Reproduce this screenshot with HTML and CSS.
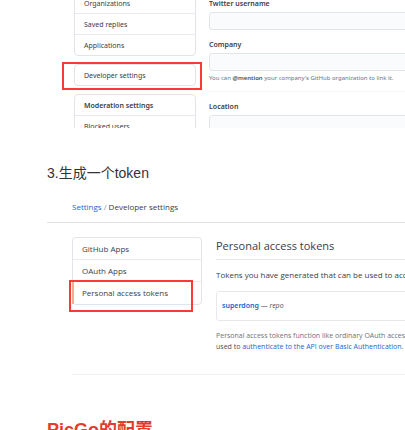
FILE: index.html
```html
<!DOCTYPE html>
<html lang="zh-CN">
<head>
<meta charset="utf-8">
<title>PicGo</title>
<link rel="stylesheet" href="styles.css">
</head>
<body>
<main class="article">
  <section class="profile">
    <nav class="side">
      <ul class="menu">
        <li><a href="#">Organizations</a></li>
        <li><a href="#">Saved replies</a></li>
        <li><a href="#">Applications</a></li>
      </ul>
      <ul class="menu marked">
        <li><a href="#">Developer settings</a></li>
      </ul>
      <ul class="menu">
        <li class="menu-title">Moderation settings</li>
        <li><a href="#">Blocked users</a></li>
      </ul>
    </nav>
    <form class="form">
      <div class="field">
        <label for="twitter">Twitter username</label>
        <input id="twitter" type="text">
      </div>
      <div class="field">
        <label for="company">Company</label>
        <input id="company" type="text">
        <p class="hint">You can <b>@mention</b> your company's GitHub organization to link it.</p>
      </div>
      <hr class="rule">
      <div class="field">
        <label for="location">Location</label>
        <input id="location" type="text">
      </div>
    </form>
  </section>

  <h3 class="step">3.生成一个token</h3>

  <section class="developer">
    <nav class="crumbs"><a href="#">Settings</a><span class="slash">/</span><span>Developer settings</span></nav>
    <div class="columns">
      <nav>
        <ul class="menu apps">
          <li><a href="#">GitHub Apps</a></li>
          <li><a href="#">OAuth Apps</a></li>
          <li class="selected marked"><a href="#">Personal access tokens</a></li>
        </ul>
      </nav>
      <div class="tokens">
        <h4>Personal access tokens</h4>
        <p class="lead">Tokens you have generated that can be used to access the GitHub API.</p>
        <div class="token"><a href="#">superdong</a> — <i>repo</i></div>
        <p class="note">Personal access tokens function like ordinary OAuth access tokens.<br><span class="dark">used to <a href="#">authenticate to the API over Basic Authentication</a>.</span></p>
      </div>
    </div>
    <hr class="end">
  </section>

  <h2 class="chapter">PicGo的配置</h2>
</main>
</body>
</html>
```
FILE: styles.css
```css
* { box-sizing: border-box; }
body {
  margin: 0;
  background: #fff;
  color: #3a4046;
  font-family: "Noto Sans", "Noto Sans CJK SC", sans-serif;
  font-size: 7px;
}
a { color: #1a63d6; text-decoration: none; }
p, h2, h3, h4, ul { margin: 0; padding: 0; }
.article { height: 100vh; overflow: hidden; padding-left: 47px; }

.profile {
  display: grid;
  grid-template-columns: 122px 1fr;
  column-gap: 13px;
  height: 128px;
  padding-left: 27px;
  overflow: hidden;
}
.side { display: flex; flex-direction: column; gap: 8px; margin-top: -8px; }
.menu {
  list-style: none;
  border: 1px solid #e1e4e8;
  border-radius: 4px;
}
.menu li { height: 21px; padding-left: 9px; line-height: 22px; border-bottom: 1px solid #e8eaed; }
.menu li:last-child { height: 20px; border-bottom: 0; }
.menu a { color: #3a4046; }
.menu-title { font-weight: 600; }
.marked { position: relative; }
.marked::after { content: ""; position: absolute; border: 2px solid #f93a37; }
.side .marked::after { inset: -3px -7px -5px -13px; }

.form { margin-top: -4px; }
.field { margin-bottom: 7px; }
.field label { display: block; margin-bottom: 2px; font-weight: 600; line-height: 15px; height: 14px; }
.field input {
  display: block;
  width: calc(100% + 8px);
  height: 18px;
  border: 1px solid #e1e4e8;
  border-radius: 3px;
  background: #fafbfc;
}
.hint { margin-top: 2px; color: #6a737d; font-size: 6px; line-height: 11px; white-space: nowrap; }
.hint b { color: #444d56; font-weight: 600; }
.rule { height: 1px; margin: 0 0 7px; border: 0; background: #f6f7f8; }

.step {
  margin: 35px 0 14px;
  color: #333;
  font: 400 14px/20px "Liberation Sans", "Noto Sans CJK SC", sans-serif;
}

.developer { font-family: "Open Sans", "Noto Sans CJK SC", sans-serif; }
.crumbs {
  display: flex;
  gap: 2px;
  height: 26px;
  padding-left: 25px;
  border-bottom: 1px solid #dfe2e6;
  font-size: 8px;
  line-height: 20px;
}
.slash { color: #8b949e; }
.columns {
  display: grid;
  grid-template-columns: 130px 1fr;
  column-gap: 14px;
  padding: 14px 0 0 25px;
}
.apps { font-size: 8px; }
.apps li { height: 22px; line-height: 21px; }
.apps li:last-child { height: 22px; }
.apps .selected { margin-left: -1px; border-left: 2px solid #fbab9b; }
.apps .selected { padding-left: 8px; }
.apps .marked::after { inset: -2px 8px -8px -5px; }
.tokens { min-width: 0; overflow: hidden; white-space: nowrap; }
.tokens h4 { height: 23px; border-bottom: 1px solid #e6e8eb; font-size: 11px; font-weight: 400; line-height: 18px; }
.lead { margin: 7px 0 8px; font-size: 8px; line-height: 16px; }
.token {
  width: calc(100% + 8px);
  height: 30px;
  padding-left: 5px;
  border: 1px solid #e6e8eb;
  border-radius: 3px;
  color: #586069;
  font-family: "Noto Sans", sans-serif;
  line-height: 28px;
}
.token a { font-weight: 600; }
.note { margin-top: 9px; color: #6a737d; line-height: 11px; }
.dark { color: #444d56; }
.end { height: 1px; margin: 22px 0 0 25px; border: 0; background: #f0f1f2; }

.chapter {
  margin-top: 43px;
  color: #e03e2d;
  font: 700 18px/24px "Liberation Sans", "Noto Sans CJK SC", sans-serif;
}
```
